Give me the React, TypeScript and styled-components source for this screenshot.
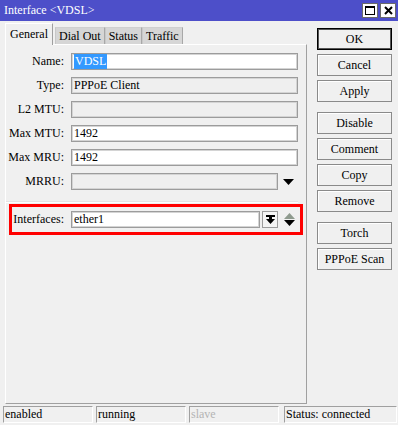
import React from 'react';
import styled, { createGlobalStyle } from 'styled-components';

const GlobalStyle = createGlobalStyle`
  html, body {
    margin: 0;
    padding: 0;
    width: 398px;
    height: 425px;
    overflow: hidden;
    background: #f0f0f0;
  }
  body {
    font-family: "Liberation Serif", "Times New Roman", serif;
    font-size: 12px;
    color: #000;
  }
`;

const Window = styled.div`
  width: 398px;
  height: 425px;
  display: flex;
  flex-direction: column;
  background: #f0f0f0;
  box-sizing: border-box;
`;

const TitleBar = styled.div`
  height: 21px;
  flex: none;
  background: #4d4fc9;
  color: #fff;
  display: flex;
  align-items: center;
  justify-content: space-between;
  padding: 0 2px 0 4px;
  font-size: 12px;
`;

const TitleButtons = styled.div`
  display: flex;
  gap: 2px;
`;

const TitleButton = styled.div`
  width: 16px;
  height: 15px;
  box-sizing: border-box;
  background: #fff;
  border: 1px solid #6a6a6a;
  display: flex;
  align-items: center;
  justify-content: center;
`;

const Body = styled.div`
  flex: 1;
  display: flex;
  padding: 2px 0 0 5px;
  min-height: 0;
`;

const LeftPane = styled.div`
  width: 302px;
  display: flex;
  flex-direction: column;
`;

const Tabs = styled.div`
  height: 21px;
  display: flex;
  align-items: flex-end;
`;

const Tab = styled.div<{ $active?: boolean }>`
  box-sizing: border-box;
  height: ${p => (p.$active ? '22px' : '17px')};
  padding: ${p => (p.$active ? '3px 4px 0 4px' : '0 3px')};
  margin-right: ${p => (p.$active ? '2px' : '0')};
  display: flex;
  align-items: ${p => (p.$active ? 'flex-start' : 'center')};
  background: ${p => (p.$active ? '#f0f0f0' : '#d6d6d6')};
  border-left: 1px solid ${p => (p.$active ? '#fff' : '#c8c8c8')};
  border-top: 1px solid ${p => (p.$active ? '#fff' : '#d0d0d0')};
  border-right: 1px solid ${p => (p.$active ? '#a0a0a0' : '#a8a8a8')};
  position: relative;
  z-index: ${p => (p.$active ? 1 : 0)};
  margin-bottom: ${p => (p.$active ? '-1px' : '0')};
`;

const Panel = styled.div`
  flex: 1;
  box-sizing: border-box;
  border-top: 1px solid #fff;
  border-left: 1px solid #fff;
  border-right: 1px solid #a0a0a0;
  border-bottom: 1px solid #a0a0a0;
  padding: 8px 8px 0 0;
  display: flex;
  flex-direction: column;
  gap: 7px;
`;

const Row = styled.div`
  display: flex;
  align-items: center;
  height: 17px;
`;

const Label = styled.div<{ $width?: number }>`
  width: ${p => p.$width ?? 58}px;
  flex: none;
  text-align: right;
  margin-right: 7px;
  white-space: nowrap;
`;

const Field = styled.div<{ $disabled?: boolean }>`
  flex: 1;
  height: 17px;
  box-sizing: border-box;
  border: 1px solid #9c9c9c;
  box-shadow: inset 0 0 0 1px #d4d4d4;
  background: ${p => (p.$disabled ? '#efefef' : '#fff')};
  display: flex;
  align-items: center;
  padding-left: 2px;
  white-space: nowrap;
`;

const Selected = styled.span`
  background: #3399ff;
  color: #fff;
  padding: 0 1px;
`;

const Trailing = styled.div<{ $width: number }>`
  width: ${p => p.$width}px;
  flex: none;
  display: flex;
  align-items: center;
  justify-content: center;
`;

const Separator = styled.div`
  height: 1px;
  background: #fff;
  margin: 4px 0 0 0;
  border-top: 1px solid #e4e4e4;
`;

const Highlight = styled.div`
  margin: -6px -5px 0 3px;
  border: 3px solid #f00;
  padding: 4px 0;
`;

const SmallButton = styled.div`
  width: 16px;
  height: 17px;
  box-sizing: border-box;
  margin-left: 2px;
  border: 1px solid #9c9c9c;
  background: #f4f4f4;
  display: flex;
  align-items: center;
  justify-content: center;
`;

const SpinArrows = styled.div`
  display: flex;
  flex-direction: column;
  align-items: center;
  gap: 1px;
`;

const ButtonColumn = styled.div`
  width: 75px;
  margin-left: 10px;
  padding-top: 5px;
  display: flex;
  flex-direction: column;
`;

const Button = styled.div<{ $primary?: boolean; $gapTop?: number }>`
  height: 22px;
  box-sizing: border-box;
  margin-top: ${p => p.$gapTop ?? 4}px;
  background: #f0f0f0;
  border: 1px solid ${p => (p.$primary ? '#000' : '#8a8a8a')};
  box-shadow: ${p =>
    p.$primary ? 'inset 0 0 0 1px #555' : 'inset 1px 1px 0 #fff'};
  display: flex;
  align-items: center;
  justify-content: center;
  white-space: nowrap;
`;

const StatusBar = styled.div`
  height: 21px;
  flex: none;
  display: grid;
  grid-template-columns: 90px 90px 90px 1fr;
  column-gap: 3px;
  padding: 2px 1px 4px 3px;
  box-sizing: border-box;
`;

const StatusCell = styled.div<{ $muted?: boolean; $shift?: number }>`
  box-sizing: border-box;
  height: 17px;
  border-top: 1px solid #a0a0a0;
  border-left: 1px solid #a0a0a0;
  border-bottom: 1px solid #fff;
  border-right: 1px solid #fff;
  padding-left: 1px;
  margin-left: ${p => p.$shift ?? 0}px;
  display: flex;
  align-items: center;
  color: ${p => (p.$muted ? '#b4b4b4' : '#000')};
  white-space: nowrap;
`;

const DownArrow = ({ color = '#000' }: { color?: string }) => (
  <svg width="11" height="6" viewBox="0 0 11 6">
    <polygon points="0,0 11,0 5.5,6" fill={color} />
  </svg>
);

const UpArrow = ({ color = '#000' }: { color?: string }) => (
  <svg width="11" height="6" viewBox="0 0 11 6">
    <polygon points="0,6 11,6 5.5,0" fill={color} />
  </svg>
);

const ToBottomIcon = () => (
  <svg width="9" height="9" viewBox="0 0 9 9">
    <rect x="0" y="0" width="9" height="2" fill="#000" />
    <rect x="3" y="2" width="3" height="3" fill="#000" />
    <polygon points="0,4 9,4 4.5,9" fill="#000" />
  </svg>
);

const MaximizeIcon = () => (
  <svg width="10" height="9" viewBox="0 0 10 9">
    <rect x="0.5" y="0.5" width="9" height="8" fill="none" stroke="#000" />
    <rect x="0" y="0" width="10" height="2" fill="#000" />
  </svg>
);

const CloseIcon = () => (
  <svg width="9" height="9" viewBox="0 0 9 9">
    <path d="M1 1 L8 8 M8 1 L1 8" stroke="#000" strokeWidth="2" />
  </svg>
);

const fields = [
  { label: 'Name:', value: 'VDSL', selected: true },
  { label: 'Type:', value: 'PPPoE Client', disabled: true },
  { label: 'L2 MTU:', value: '', disabled: true },
  { label: 'Max MTU:', value: '1492' },
  { label: 'Max MRU:', value: '1492' },
];

const buttons = [
  { label: 'OK', primary: true, gap: 0 },
  { label: 'Cancel' },
  { label: 'Apply' },
  { label: 'Disable', gap: 10 },
  { label: 'Comment' },
  { label: 'Copy' },
  { label: 'Remove' },
  { label: 'Torch', gap: 10 },
  { label: 'PPPoE Scan' },
];

export default function App() {
  return (
    <>
      <GlobalStyle />
      <Window>
        <TitleBar>
          <span>Interface &lt;VDSL&gt;</span>
          <TitleButtons>
            <TitleButton><MaximizeIcon /></TitleButton>
            <TitleButton><CloseIcon /></TitleButton>
          </TitleButtons>
        </TitleBar>
        <Body>
          <LeftPane>
            <Tabs>
              <Tab $active>General</Tab>
              <Tab>Dial Out</Tab>
              <Tab>Status</Tab>
              <Tab>Traffic</Tab>
            </Tabs>
            <Panel>
              {fields.map(f => (
                <Row key={f.label}>
                  <Label>{f.label}</Label>
                  <Field $disabled={f.disabled}>
                    {f.selected ? <Selected>{f.value}</Selected> : f.value}
                  </Field>
                </Row>
              ))}
              <Row>
                <Label>MRRU:</Label>
                <Field $disabled />
                <Trailing $width={20}><DownArrow /></Trailing>
              </Row>
              <Separator />
              <Highlight>
                <Row>
                  <Label $width={52}>Interfaces:</Label>
                  <Field>ether1</Field>
                  <SmallButton><ToBottomIcon /></SmallButton>
                  <Trailing $width={22}>
                    <SpinArrows>
                      <UpArrow color="#8e9a8e" />
                      <DownArrow />
                    </SpinArrows>
                  </Trailing>
                </Row>
              </Highlight>
            </Panel>
          </LeftPane>
          <ButtonColumn>
            {buttons.map(b => (
              <Button key={b.label} $primary={b.primary} $gapTop={b.gap}>
                {b.label}
              </Button>
            ))}
          </ButtonColumn>
        </Body>
        <StatusBar>
          <StatusCell>enabled</StatusCell>
          <StatusCell>running</StatusCell>
          <StatusCell $muted>slave</StatusCell>
          <StatusCell $shift={2}>Status: connected</StatusCell>
        </StatusBar>
      </Window>
    </>
  );
}
